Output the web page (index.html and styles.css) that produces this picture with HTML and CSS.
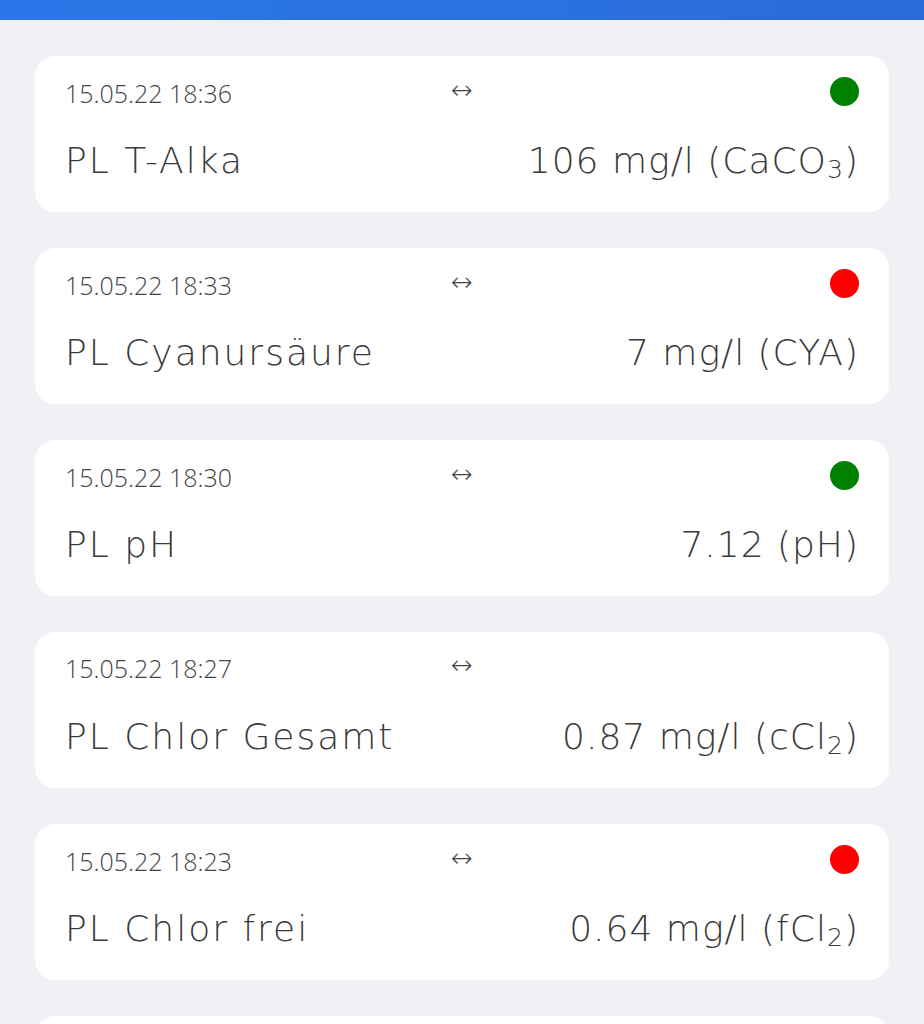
FILE: index.html
```html
<!DOCTYPE html>
<html lang="de">
<head>
    <meta charset="UTF-8">
    <meta name="viewport" content="width=device-width, initial-scale=1.0">
    <title>Messwerte</title>
    <link rel="stylesheet" href="styles.css">
</head>
<body>
    <div class="topbar"></div>

    <main class="list">
        <div class="card">
            <div class="card-top">
                <span class="date">15.05.22 18:36</span>
                <span class="arrow">&#8596;</span>
                <span class="dot ok"></span>
            </div>
            <div class="card-main">
                <span class="name">PL T-Alka</span>
                <span class="value">106 mg/l (CaCO<sub>3</sub>)</span>
            </div>
        </div>

        <div class="card">
            <div class="card-top">
                <span class="date">15.05.22 18:33</span>
                <span class="arrow">&#8596;</span>
                <span class="dot bad"></span>
            </div>
            <div class="card-main">
                <span class="name">PL Cyanursäure</span>
                <span class="value">7 mg/l (CYA)</span>
            </div>
        </div>

        <div class="card">
            <div class="card-top">
                <span class="date">15.05.22 18:30</span>
                <span class="arrow">&#8596;</span>
                <span class="dot ok"></span>
            </div>
            <div class="card-main">
                <span class="name">PL pH</span>
                <span class="value">7.12 (pH)</span>
            </div>
        </div>

        <div class="card">
            <div class="card-top">
                <span class="date">15.05.22 18:27</span>
                <span class="arrow">&#8596;</span>
                <span></span>
            </div>
            <div class="card-main">
                <span class="name">PL Chlor Gesamt</span>
                <span class="value">0.87 mg/l (cCl<sub>2</sub>)</span>
            </div>
        </div>

        <div class="card">
            <div class="card-top">
                <span class="date">15.05.22 18:23</span>
                <span class="arrow">&#8596;</span>
                <span class="dot bad"></span>
            </div>
            <div class="card-main">
                <span class="name">PL Chlor frei</span>
                <span class="value">0.64 mg/l (fCl<sub>2</sub>)</span>
            </div>
        </div>

        <!-- next entry, scrolled below the fold -->
        <div class="card card-empty"></div>
    </main>
</body>
</html>
```

FILE: styles.css
```css
body {
    margin: 0;
    padding: 0;
    background: #eff1f5;
    font-family: "DejaVu Sans", "Open Sans", sans-serif;
    font-weight: 200;
    color: #3a3a3a;
}

.topbar {
    height: 20px;
    background: linear-gradient(90deg, #2b77e9, #2a6cd8);
}

.list {
    display: flex;
    flex-direction: column;
    gap: 36px;
    padding: 36px 35px;
}

.card {
    background: white;
    border-radius: 20px;
    padding: 21px 30px 29px;
}

.card-empty {
    height: 107px;
}

.card-top {
    display: grid;
    grid-template-columns: 1fr auto 1fr;
    align-items: center;
    height: 24px;
}

.date {
    font-family: "Open Sans", sans-serif;
    font-weight: 300;
    font-size: 25px;
    line-height: 24px;
    color: #444;
}

.arrow {
    font-size: 26px;
    line-height: 24px;
    margin-bottom: 6px;
    color: #444;
}

.dot {
    justify-self: end;
    width: 29px;
    height: 29px;
    margin-bottom: 2px;
    border-radius: 50%;
}

.dot.ok {
    background: #008000;
}

.dot.bad {
    background: #ff0000;
}

.card-main {
    display: flex;
    justify-content: space-between;
    align-items: center;
    margin-top: 38px;
    height: 44px;
    font-size: 36px;
    line-height: 44px;
    letter-spacing: 1px;
}

.name {
    letter-spacing: 2px;
}

.value sub {
    font-size: 0.7em;
    line-height: 0;
    vertical-align: -0.2em;
}
```
